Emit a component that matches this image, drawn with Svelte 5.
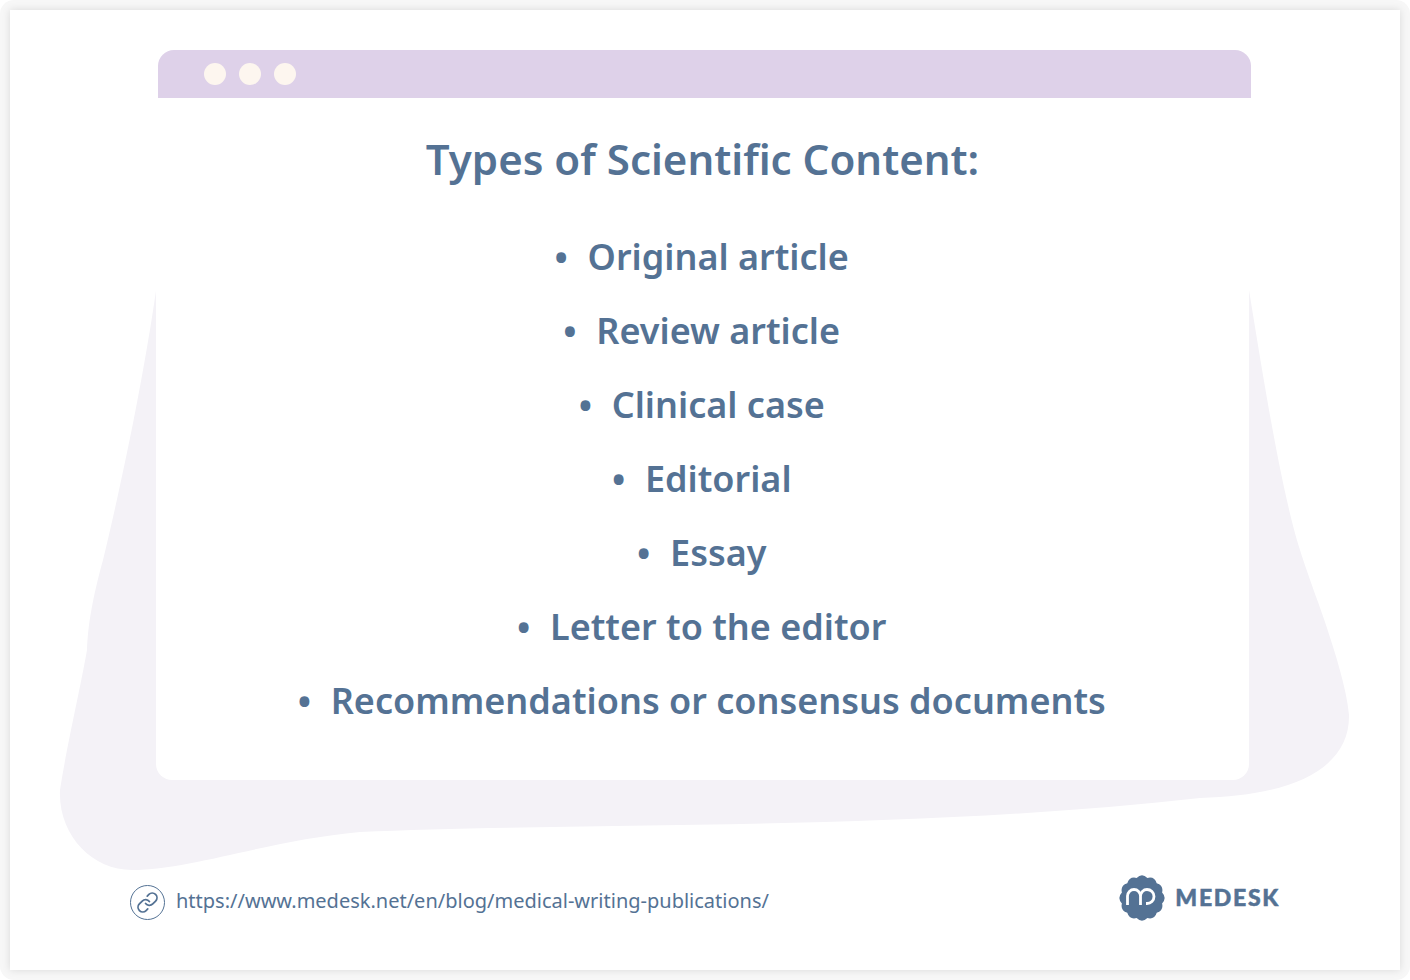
<script lang="ts">
  const items = [
    "Original article",
    "Review article",
    "Clinical case",
    "Editorial",
    "Essay",
    "Letter to the editor",
    "Recommendations or consensus documents",
  ];

  // scalloped badge behind the logo mark
  function badgePath(lobes: number, peak: number, inner: number): string {
    const step = (Math.PI * 2) / lobes;
    let d = "";
    for (let i = 0; i < lobes; i++) {
      const a = i * step - Math.PI / 2;
      const x0 = 23 + inner * Math.cos(a - step / 2);
      const y0 = 23 + inner * Math.sin(a - step / 2);
      const x1 = 23 + inner * Math.cos(a + step / 2);
      const y1 = 23 + inner * Math.sin(a + step / 2);
      const cx = 23 + peak * Math.cos(a);
      const cy = 23 + peak * Math.sin(a);
      if (i === 0) d += `M${x0.toFixed(2)} ${y0.toFixed(2)}`;
      d += ` Q${cx.toFixed(2)} ${cy.toFixed(2)} ${x1.toFixed(2)} ${y1.toFixed(2)}`;
    }
    return d + " Z";
  }
</script>

<div class="page">
  <div class="sheet">
    <svg class="blob" width="1410" height="980" viewBox="0 0 1410 980" aria-hidden="true">
      <path
        d="M160 262 C146 370 120 490 103 560 C92 600 88 625 87 650 C80 690 66 750 60 790 C58 835 92 870 132 870 C190 870 270 840 360 832 C560 822 900 832 1200 798 C1290 796 1350 770 1349 715 C1347 690 1335 650 1318 602 C1305 565 1297 545 1288 505 C1275 450 1262 370 1249 290 L1249 262 Z"
        fill="#f4f2f7"
      />
    </svg>

    <main class="window">
      <div class="titlebar">
        <span class="dot"></span>
        <span class="dot"></span>
        <span class="dot"></span>
      </div>
      <div class="body">
        <h1>Types of Scientific Content:</h1>
        <ul>
          {#each items as item}
            <li>{item}</li>
          {/each}
        </ul>
      </div>
    </main>

    <footer>
      <div class="source">
        <svg class="link-icon" width="36" height="36" viewBox="0 0 36 36" fill="none" stroke="#547294">
          <circle cx="17.5" cy="17.5" r="17" stroke-width="1" />
          <g transform="translate(6.1 6.1) scale(.95)" stroke-width="1.9" stroke-linecap="round">
            <path d="M10 13a5 5 0 0 0 7.54.54l3-3a5 5 0 0 0-7.07-7.07l-1.72 1.71" />
            <path d="M14 11a5 5 0 0 0-7.54-.54l-3 3a5 5 0 0 0 7.07 7.07l1.71-1.71" />
          </g>
        </svg>
        <span class="url">https://www.medesk.net/en/blog/medical-writing-publications/</span>
      </div>
      <div class="brand">
        <svg width="46" height="46" viewBox="0 0 46 46">
          <path d={badgePath(12, 25.2, 20.8)} fill="#547294" />
          <path
            d="M8.5 30 V21 a6.5 6.5 0 0 1 13 0 V30 M21.5 21 a6.5 6.5 0 0 1 6.5 -6.5 a7 7 0 0 1 0 14 h-1"
            fill="none"
            stroke="#fff"
            stroke-width="2.8"
          />
        </svg>
        <span class="wordmark">MEDESK</span>
      </div>
    </footer>
  </div>
</div>

<style>
  :global(body) {
    margin: 0;
    background: #fff;
  }

  .page {
    width: 1410px;
    height: 980px;
    box-sizing: border-box;
    padding: 10px;
    background: #f7f7f7;
    border-radius: 14px;
    overflow: hidden;
    font-family: "Noto Sans", sans-serif;
    color: #547294;
  }

  .sheet {
    position: relative;
    height: 960px;
    background: #fff;
    box-shadow: 0 0 8px rgba(0, 0, 0, 0.12);
    padding: 40px 120px 0 146px;
    box-sizing: border-box;
  }

  .blob {
    position: absolute;
    left: -10px;
    top: -10px;
  }

  .window {
    position: relative;
    width: 1093px;
    height: 730px;
    display: flex;
    flex-direction: column;
  }

  .titlebar {
    height: 48px;
    margin-left: 2px;
    margin-right: -2px;
    box-sizing: border-box;
    padding-left: 46px;
    display: flex;
    align-items: center;
    gap: 13px;
    background: #ded1e9;
    border-radius: 16px 16px 0 0;
  }

  .dot {
    width: 22px;
    height: 22px;
    border-radius: 50%;
    background: #fdf6ef;
  }

  .body {
    flex: 1;
    background: #fff;
    border-radius: 0 0 16px 16px;
    text-align: center;
  }

  h1 {
    margin: 31px 0 0;
    font-size: 42px;
    line-height: 60px;
    font-weight: 600;
  }

  ul {
    list-style: none;
    margin: 31px 0 0;
    padding: 0;
  }

  li {
    font-size: 36px;
    line-height: 74px;
    font-weight: 600;
    padding-right: 2px;
  }

  li::before {
    content: "•";
    display: inline-block;
    width: 33.5px;
    text-align: left;
    font-size: 38px;
    line-height: 1;
    vertical-align: -1px;
  }

  footer {
    position: relative;
    margin-top: 95px;
    margin-left: -26px;
    display: flex;
    justify-content: space-between;
    align-items: flex-start;
  }

  .source {
    margin-top: 10px;
    display: flex;
    align-items: center;
    gap: 10px;
    font-size: 20px;
    font-weight: 400;
  }

  .url {
    margin-bottom: 6px;
  }

  .link-icon {
    flex: none;
  }

  .brand {
    display: flex;
    align-items: center;
    gap: 10px;
  }

  .wordmark {
    font-family: "Lato", sans-serif;
    font-weight: 900;
    font-size: 23px;
    letter-spacing: 1.7px;
    -webkit-text-stroke: 0.5px currentColor;
    margin-top: -3px;
  }
</style>
